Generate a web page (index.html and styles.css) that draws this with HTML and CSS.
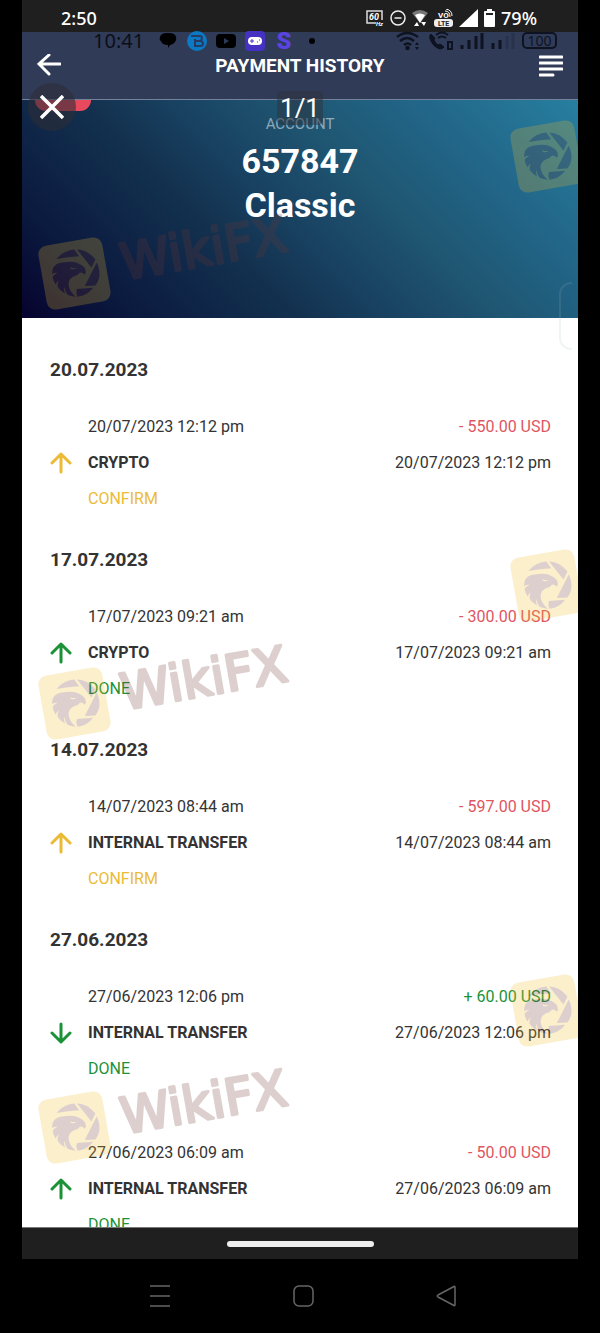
FILE: index.html
```html
<!DOCTYPE html>
<html lang="en">
<head>
    <meta charset="UTF-8">
    <meta name="viewport" content="width=device-width, initial-scale=1.0">
    <title>Payment History</title>
    <link rel="stylesheet" href="styles.css">
</head>
<body>
    <!-- Shared shapes -->
    <svg class="defs" aria-hidden="true">
        <symbol id="arrow-up" viewBox="0 0 22 22">
            <path d="M11 20V2M2 11l9-9 9 9" fill="none" stroke="currentColor" stroke-width="3" stroke-linecap="round" stroke-linejoin="round"/>
        </symbol>
        <symbol id="arrow-down" viewBox="0 0 22 22">
            <path d="M11 2v18M2 11l9 9 9-9" fill="none" stroke="currentColor" stroke-width="3" stroke-linecap="round" stroke-linejoin="round"/>
        </symbol>
        <symbol id="eagle" viewBox="323 59 220 220">
            <rect x="335.500" y="71.500" width="195" height="195" rx="26" transform="rotate(-10 433 169)" fill="#f0bb29"/>
            <g fill="#6e3632">
                <path d="M379 125Q398 101 432 97L447 117Q412 119 379 125z"/>
                <path d="M441 97Q474 99 496 127L484 151z"/>
                <path d="M500 136Q512 160 507 183Q503 197 496 205L464 207Z"/>
                <path d="M440 216L489 212Q472 236 442 239Q436 228 440 216z"/>
                <path d="M369 151Q378 137 397 136Q430 129 448 140Q466 148 467 162Q468 169 464 173Q459 166 450 166Q443 176 430 178Q415 186 415 202Q417 223 437 239Q423 238 412 233Q404 222 403 208Q400 218 404 229Q389 221 382 208Q380 199 386 190Q378 195 376 202Q368 190 367 179Q374 170 382 167Q372 166 366 171Q365 160 369 151z"/>
            </g>
            <path d="M419 150Q430 154 440 152Q434 158 424 156z" fill="#f0bb29"/>
        </symbol>
    </svg>

    <div class="screen">
        <div class="status">
            <span class="clock">2:50</span>
            <div class="status-icons">
                <svg width="18" height="18" viewBox="0 0 18 18">
                    <path d="M10 14H1V2h15v9" fill="none" stroke="#ddd" stroke-width="1.500"/>
                    <text x="3" y="11" class="tiny italic" font-size="9">60</text>
                    <text x="10" y="17" class="tiny italic" font-size="6">Hz</text>
                </svg>
                <svg width="16" height="16" viewBox="0 0 16 16" fill="none" stroke="#eee" stroke-width="1.500">
                    <circle cx="8" cy="8" r="7"/><path d="M4.500 8h7"/>
                </svg>
                <svg width="16" height="18" viewBox="0 0 16 18">
                    <path d="M0 4Q8-2 16 4L8 14z" fill="#777"/>
                    <path d="M3 6Q8 3 13 6L8 14z" fill="#fff"/>
                    <path d="M2 17l3-4 2 4zM9 13h5l-2 4z" fill="#fff"/>
                </svg>
                <svg width="19" height="18" viewBox="0 0 19 18">
                    <text x="4" y="9" class="tiny" font-size="8">VO</text>
                    <path d="M11 2q5 0 5 6M12 0q6 1 6 7" fill="none" stroke="#fff"/>
                    <rect y="10" width="19" height="8" rx="3" fill="#eee"/>
                    <text x="4" y="17" class="tiny dark" font-size="7">LTE</text>
                </svg>
                <svg width="19" height="18" viewBox="0 0 19 18"><path d="M19 0v18H0z" fill="#fff"/></svg>
                <svg width="11" height="18" viewBox="0 0 11 18">
                    <path d="M3 0h5v2h2q1 0 1 1v14q0 1-1 1H1q-1 0-1-1V3q0-1 1-1h2z" fill="#fff"/>
                    <path d="M2 4h7v2H2z" fill="#222"/>
                </svg>
                <span>79%</span>
            </div>
        </div>

        <header class="topbar">
            <button class="icon-btn" aria-label="Back">
                <svg width="24" height="24" viewBox="0 0 24 24" fill="none" stroke="#fff" stroke-width="3" stroke-linecap="round">
                    <path d="M23 10H3M12 1L2 10l10 10"/>
                </svg>
            </button>
            <h1>PAYMENT HISTORY</h1>
            <button class="icon-btn" aria-label="Menu">
                <svg width="24" height="24" viewBox="0 0 24 24" stroke="#fff" stroke-width="3" stroke-linecap="round">
                    <path d="M1 3h22M1 9h22M1 15h22M1 21h13"/>
                </svg>
            </button>

            <!-- Second status line lying over the bar -->
            <div class="ghost-status">
                <div class="ghost-left">
                    <span class="ghost-clock">10:41</span>
                    <svg width="20" height="20" viewBox="0 0 20 20"><path d="M9 2q5 0 7 1 4 3 1 8-2 3-5 3l-2 3v-3Q4 14 3 10 1 9 2 6q1-4 7-4z"/></svg>
                    <svg width="20" height="20" viewBox="0 0 20 20">
                        <circle cx="10" cy="10" r="10" fill="#0b79c4"/>
                        <path d="M4 5h9q2 0 2 2t-2 3q3 0 3 2.500t-3 2.500H8V8M8 10h5" fill="none" stroke="#253b63" stroke-width="2"/>
                    </svg>
                    <svg width="20" height="20" viewBox="0 0 20 20"><rect y="3" width="20" height="14" rx="4"/><path d="M8 7l5 3-5 3z" fill="#2c3955"/></svg>
                    <svg width="20" height="20" viewBox="0 0 20 20">
                        <rect width="20" height="20" rx="4" fill="#4531c2"/>
                        <rect x="3" y="6" width="14" height="8" rx="4" fill="#fff"/>
                        <path d="M5 10h4M7 8v4M12 11h1M14 9h1" stroke="#4531c2"/>
                    </svg>
                    <span class="ghost-s">S</span>
                    <svg width="20" height="20" viewBox="0 0 20 20"><circle cx="9" cy="10" r="3"/></svg>
                </div>
                <div class="ghost-right">
                    <svg width="25" height="20" viewBox="0 0 25 20" fill="none" stroke="#0e1322" stroke-width="2.500">
                        <path d="M1 6Q11-2 22 6M4 10q7-6 14 0M8 14q4-3 7 0"/>
                        <circle cx="11.500" cy="17" r="1" fill="#0e1322"/>
                        <path d="M19 14l2-3 2 3zM19 16l2 3 2-3z" stroke="none" fill="#0e1322"/>
                    </svg>
                    <svg width="25" height="20" viewBox="0 0 25 20" fill="none" stroke="#0e1322">
                        <path d="M3 3q-2 1-1 5 3 8 10 10 3 0 4-2l-4-3-2 1q-3-2-4-5l1-2z" fill="#0e1322"/>
                        <path d="M8 4q6-5 12 0M10 7q4-3 8 0" stroke-width="2"/>
                        <rect x="20" y="11" width="4" height="7" stroke-width="2"/>
                    </svg>
                    <svg width="24" height="20" viewBox="0 0 24 20" stroke="#0e1322" stroke-width="3">
                        <path d="M2 18v-4M9 18V9M16 18V5M22 18V2"/>
                    </svg>
                    <svg width="24" height="20" viewBox="0 0 24 20" stroke="#0e1322" stroke-width="3">
                        <path d="M2 18v-6M9 18V9"/><path d="M16 18V5M22 18V2" opacity=".2"/>
                    </svg>
                    <span class="ghost-battery">100</span>
                </div>
            </div>
        </header>

        <section class="account">
            <span class="tag"></span>
            <span class="account-label">ACCOUNT</span>
            <strong>657847</strong>
            <strong>Classic</strong>
            <button class="close" aria-label="Close">
                <svg width="24" height="24" viewBox="0 0 24 24" stroke="#fff" stroke-width="3.500"><path d="M1 1l22 22M23 1L1 23"/></svg>
            </button>
            <span class="counter">1/1</span>
            <span class="edge-handle"></span>
        </section>

        <main class="history">
            <section class="day">
                <h2>20.07.2023</h2>
                <div class="entry">
                    <svg class="arrow pending"><use href="#arrow-up"/></svg>
                    <span>20/07/2023 12:12 pm</span>
                    <span class="amount minus">- 550.00 USD</span>
                    <b>CRYPTO</b>
                    <span class="amount">20/07/2023 12:12 pm</span>
                    <span class="pending">CONFIRM</span>
                </div>
            </section>
            <section class="day">
                <h2>17.07.2023</h2>
                <div class="entry">
                    <svg class="arrow done"><use href="#arrow-up"/></svg>
                    <span>17/07/2023 09:21 am</span>
                    <span class="amount minus">- 300.00 USD</span>
                    <b>CRYPTO</b>
                    <span class="amount">17/07/2023 09:21 am</span>
                    <span class="done">DONE</span>
                </div>
            </section>
            <section class="day">
                <h2>14.07.2023</h2>
                <div class="entry">
                    <svg class="arrow pending"><use href="#arrow-up"/></svg>
                    <span>14/07/2023 08:44 am</span>
                    <span class="amount minus">- 597.00 USD</span>
                    <b>INTERNAL TRANSFER</b>
                    <span class="amount">14/07/2023 08:44 am</span>
                    <span class="pending">CONFIRM</span>
                </div>
            </section>
            <section class="day">
                <h2>27.06.2023</h2>
                <div class="entry">
                    <svg class="arrow done"><use href="#arrow-down"/></svg>
                    <span>27/06/2023 12:06 pm</span>
                    <span class="amount done">+ 60.00 USD</span>
                    <b>INTERNAL TRANSFER</b>
                    <span class="amount">27/06/2023 12:06 pm</span>
                    <span class="done">DONE</span>
                </div>
                <div class="entry">
                    <svg class="arrow done"><use href="#arrow-up"/></svg>
                    <span>27/06/2023 06:09 am</span>
                    <span class="amount minus">- 50.00 USD</span>
                    <b>INTERNAL TRANSFER</b>
                    <span class="amount">27/06/2023 06:09 am</span>
                    <span class="done">DONE</span>
                </div>
            </section>
        </main>

        <div class="gesture"><span></span></div>

        <!-- Watermarks over the whole screen -->
        <div class="mark mark-1">
            <svg class="badge"><use href="#eagle"/></svg>
            <svg class="word" viewBox="0 0 200 80"><text x="13" y="62" transform="rotate(-10 13 62)">WikiFX</text></svg>
        </div>
        <div class="mark mark-2">
            <svg class="badge"><use href="#eagle"/></svg>
            <svg class="word" viewBox="0 0 200 80"><text x="13" y="62" transform="rotate(-10 13 62)">WikiFX</text></svg>
        </div>
        <div class="mark mark-3">
            <svg class="badge"><use href="#eagle"/></svg>
            <svg class="word" viewBox="0 0 200 80"><text x="13" y="62" transform="rotate(-10 13 62)">WikiFX</text></svg>
        </div>
        <svg class="badge side side-1"><use href="#eagle"/></svg>
        <svg class="badge side side-2"><use href="#eagle"/></svg>
        <svg class="badge side side-3"><use href="#eagle"/></svg>
    </div>

    <nav class="system-nav">
        <button aria-label="Recent apps">
            <svg width="24" height="24" viewBox="0 0 24 24"><path d="M2 2h20M2 12h20M2 22h20"/></svg>
        </button>
        <button aria-label="Home">
            <svg width="24" height="24" viewBox="0 0 24 24"><rect x="3" y="2" width="19" height="20" rx="5"/></svg>
        </button>
        <button aria-label="Go back">
            <svg width="24" height="24" viewBox="0 0 24 24"><path d="M20 2.500q1-.5 1 1v17q0 1.500-1 1L4 13q-1.500-1 0-2z"/></svg>
        </button>
    </nav>
</body>
</html>
```
FILE: styles.css
```css
* {
    box-sizing: border-box;
}
body {
    display: flex;
    flex-direction: column;
    height: 100vh;
    margin: 0;
    background: #000;
    color: #333;
    font-family: Roboto, "Liberation Sans", sans-serif;
    font-size: 16px;
}
button {
    padding: 0;
    border: 0;
    background: none;
    cursor: pointer;
}
svg {
    display: block;
    flex: none;
}
.defs {
    position: absolute;
    width: 0;
    height: 0;
}
.screen {
    position: relative;
    display: flex;
    flex-direction: column;
    flex: 1;
    min-height: 0;
    margin: 0 22px;
    overflow: hidden;
    background: #fff;
}

/* Status line */
.status {
    display: flex;
    justify-content: space-between;
    align-items: center;
    flex: none;
    height: 32px;
    padding: 4px 41px 0 39px;
    background: #1f1f1f;
    color: #fff;
    font-family: "Noto Sans", sans-serif;
    font-size: 18px;
    font-weight: 500;
}
.status-icons {
    display: flex;
    align-items: center;
    gap: 6px;
}
.tiny {
    fill: #fff;
    font-family: Roboto, sans-serif;
    font-weight: 700;
}
.tiny.italic {
    font-style: italic;
}
.tiny.dark {
    fill: #222;
}

/* Title bar */
.topbar {
    position: relative;
    display: flex;
    justify-content: space-between;
    align-items: center;
    flex: none;
    height: 68px;
    padding: 0 15px;
    border-bottom: 1px solid #748299;
    background: #303b57;
}
.topbar h1 {
    margin: 0;
    color: #fff;
    font-size: 19px;
    font-weight: 700;
}
.ghost-status {
    position: absolute;
    top: -4px;
    left: 0;
    right: 0;
    display: flex;
    justify-content: space-between;
    padding: 0 21px 0 71px;
    pointer-events: none;
}
.ghost-left, .ghost-right {
    display: flex;
    align-items: center;
    height: 25px;
}
.ghost-left {
    gap: 9px;
}
.ghost-right {
    gap: 7px;
}
.ghost-clock {
    margin-right: 5px;
    color: #0b0e18;
    font-family: "Noto Sans", sans-serif;
    font-size: 20px;
}
.ghost-s {
    width: 20px;
    color: #5a43e0;
    font-size: 24px;
    font-weight: 900;
    text-align: center;
}
.ghost-battery {
    width: 35px;
    border: 2px solid #0e1322;
    border-radius: 5px;
    color: #0e1322;
    font-family: "Noto Sans", sans-serif;
    font-size: 14px;
    line-height: 13px;
    text-align: center;
}

/* Account banner */
.account {
    position: relative;
    display: flex;
    flex-direction: column;
    align-items: center;
    flex: none;
    padding: 14px 0 91px;
    background: linear-gradient(45deg, #06032f 0%, #0b1a3f 15%, #13314f 36%, #1a4565 50%, #1f5672 62%, #22678a 80%, #277f9f 100%);
    color: #fff;
}
.account-label {
    margin-bottom: 5px;
    color: rgba(255, 255, 255, 0.5);
    font-size: 15px;
    line-height: 20px;
}
.account strong {
    font-size: 34px;
    line-height: 44px;
}
.tag {
    position: absolute;
    top: 0;
    left: 13px;
    width: 56px;
    height: 11px;
    border-radius: 0 0 16px 16px;
    background: #e8495c;
}
.close {
    position: absolute;
    top: -17px;
    left: 6px;
    display: grid;
    place-items: center;
    width: 48px;
    height: 48px;
    border-radius: 50%;
    background: rgba(45, 45, 55, 0.6);
}
.counter {
    position: absolute;
    top: -9px;
    width: 46px;
    border-radius: 5px;
    background: rgba(45, 50, 60, 0.5);
    font-size: 26px;
    line-height: 34px;
    text-align: center;
}
.edge-handle {
    position: absolute;
    bottom: -32px;
    right: 6px;
    width: 13px;
    height: 68px;
    border: 2px solid rgba(160, 180, 190, 0.15);
    border-right: 0;
    border-radius: 12px 0 0 12px;
}

/* Payments */
.history {
    flex: 1;
    min-height: 0;
    padding: 34px 27px 0 28px;
    overflow: hidden;
}
.day {
    margin-bottom: 25px;
}
.day h2 {
    margin: 0 0 21px;
    font-size: 19px;
    font-weight: 700;
    line-height: 36px;
}
.entry {
    display: grid;
    grid-template-columns: 38px 1fr auto;
    line-height: 36px;
}
.entry + .entry {
    margin-top: 48px;
}
.arrow {
    grid-row: 1 / 4;
    align-self: center;
    width: 22px;
    height: 22px;
}
.amount {
    text-align: right;
}
.minus {
    color: #e05560;
}
.pending {
    color: #ebbb35;
}
.done {
    color: #1c9238;
}

.gesture {
    display: grid;
    place-items: center;
    flex: none;
    height: 32px;
    border-top: 1px solid #777;
    background: #1f1f1f;
}
.gesture span {
    width: 147px;
    height: 6px;
    border-radius: 3px;
    background: #eee;
}

/* Watermarks */
.mark, .side {
    position: absolute;
    opacity: 0.23;
    pointer-events: none;
}
.mark {
    left: 16px;
    display: flex;
    align-items: flex-end;
}
.word {
    width: 200px;
    height: 80px;
    margin-bottom: 12px;
    overflow: visible;
}
.word text {
    fill: #6e3632;
    stroke: #6e3632;
    stroke-width: 3px;
    stroke-linejoin: round;
    font-family: "DejaVu Sans", sans-serif;
    font-size: 50px;
    font-weight: 400;
}
.badge {
    width: 73px;
    height: 73px;
}
.mark-1 {
    top: 218px;
}
.mark-2 {
    top: 648px;
}
.mark-3 {
    top: 1072px;
}
.side {
    right: -5px;
}
.side-1 {
    top: 120px;
}
.side-2 {
    top: 549px;
}
.side-3 {
    top: 974px;
}

/* Device buttons */
.system-nav {
    display: flex;
    justify-content: center;
    align-items: center;
    gap: 119px;
    flex: none;
    height: 74px;
    padding-left: 6px;
}
.system-nav svg {
    fill: none;
    stroke: #666;
    stroke-width: 1.5;
}
```
